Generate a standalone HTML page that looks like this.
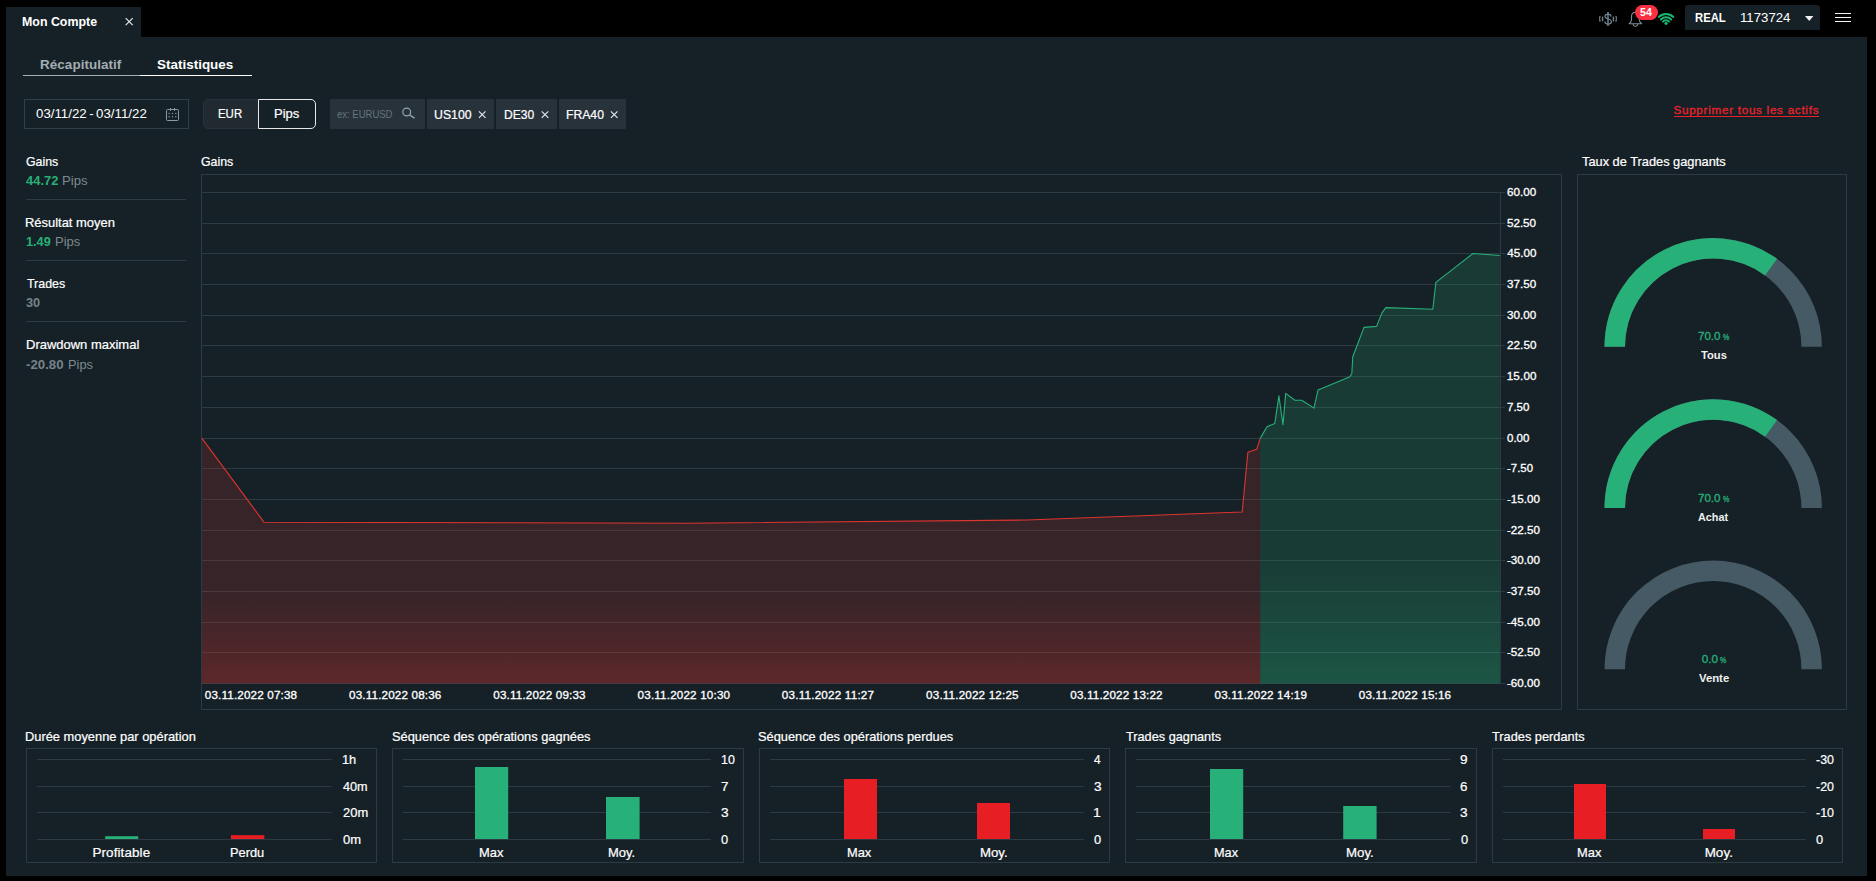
<!DOCTYPE html>
<html lang="fr"><head><meta charset="utf-8"><title>Mon Compte - Statistiques</title>
<style>

html,body{margin:0;padding:0;background:#000;}
body{width:1876px;height:881px;position:relative;overflow:hidden;font-family:"Liberation Sans", sans-serif;}
.t{position:absolute;white-space:nowrap;line-height:1;margin:0;padding:0;display:block;transform-origin:0 0;}

.card{}
</style></head>
<body>

<div class="tab" style="position:absolute;left:6px;top:7px;width:135px;height:31px;box-sizing:border-box;background:#162127;"></div>
<div class="panel" style="position:absolute;left:6px;top:37px;width:1861px;height:839px;box-sizing:border-box;background:#162127;"></div>
<div class="account" style="position:absolute;left:1685px;top:5px;width:135px;height:25px;box-sizing:border-box;background:#162127;border-radius:3px 3px 0 0;"></div>
<div class="" style="position:absolute;left:23px;top:75px;width:117px;height:1px;box-sizing:border-box;background:#a3adb2;"></div>
<div class="" style="position:absolute;left:140px;top:75px;width:112px;height:1px;box-sizing:border-box;background:#ffffff;"></div>
<div class="date" style="position:absolute;left:24px;top:99px;width:165px;height:30px;box-sizing:border-box;border:1px solid #2f3f48;"></div>
<div class="seg" style="position:absolute;left:203px;top:99px;width:56px;height:30px;box-sizing:border-box;background:#212a31;border:1px solid #28323a;border-radius:5px 0 0 5px;"></div>
<div class="seg on" style="position:absolute;left:258px;top:99px;width:58px;height:30px;box-sizing:border-box;background:#162127;border:1px solid #e8e8e8;border-radius:0 5px 5px 0;"></div>
<div class="search" style="position:absolute;left:330px;top:99px;width:95px;height:30px;box-sizing:border-box;background:#28323a;"></div>
<div class="tag" style="position:absolute;left:427px;top:99px;width:67px;height:30px;box-sizing:border-box;background:#28323a;"></div>
<div class="tag" style="position:absolute;left:496px;top:99px;width:61px;height:30px;box-sizing:border-box;background:#28323a;"></div>
<div class="tag" style="position:absolute;left:559px;top:99px;width:67px;height:30px;box-sizing:border-box;background:#28323a;"></div>
<div class="" style="position:absolute;left:1674px;top:116px;width:145px;height:1px;box-sizing:border-box;background:#e8222b;"></div>
<div class="" style="position:absolute;left:26px;top:199px;width:160px;height:1px;box-sizing:border-box;background:#2b3a43;"></div>
<div class="" style="position:absolute;left:26px;top:260px;width:160px;height:1px;box-sizing:border-box;background:#2b3a43;"></div>
<div class="" style="position:absolute;left:26px;top:321px;width:160px;height:1px;box-sizing:border-box;background:#2b3a43;"></div>
<div class="card" style="position:absolute;left:201px;top:174px;width:1361px;height:536px;box-sizing:border-box;border:1px solid #2b3a43;"></div>
<div class="card" style="position:absolute;left:1577px;top:174px;width:270px;height:536px;box-sizing:border-box;border:1px solid #2b3a43;"></div>
<svg style="position:absolute;left:201px;top:174px;overflow:visible;" width="1361" height="536" viewBox="201 174 1361 536"><defs><linearGradient id="gr" x1="0" y1="438" x2="0" y2="683.5" gradientUnits="userSpaceOnUse"><stop offset="0" stop-color="#e0342f" stop-opacity="0.16"/><stop offset="0.64" stop-color="#e0342f" stop-opacity="0.165"/><stop offset="1" stop-color="#e0342f" stop-opacity="0.35"/></linearGradient><linearGradient id="gg" x1="0" y1="253" x2="0" y2="683.5" gradientUnits="userSpaceOnUse"><stop offset="0" stop-color="#27b077" stop-opacity="0.175"/><stop offset="0.7" stop-color="#27b077" stop-opacity="0.18"/><stop offset="1" stop-color="#27b077" stop-opacity="0.37"/></linearGradient></defs><line x1="202" x2="1505" y1="192.5" y2="192.5" stroke="#2b3a43" stroke-width="1"/><line x1="202" x2="1505" y1="223.5" y2="223.5" stroke="#2b3a43" stroke-width="1"/><line x1="202" x2="1505" y1="253.5" y2="253.5" stroke="#2b3a43" stroke-width="1"/><line x1="202" x2="1505" y1="284.5" y2="284.5" stroke="#2b3a43" stroke-width="1"/><line x1="202" x2="1505" y1="315.5" y2="315.5" stroke="#2b3a43" stroke-width="1"/><line x1="202" x2="1505" y1="345.5" y2="345.5" stroke="#2b3a43" stroke-width="1"/><line x1="202" x2="1505" y1="376.5" y2="376.5" stroke="#2b3a43" stroke-width="1"/><line x1="202" x2="1505" y1="407.5" y2="407.5" stroke="#2b3a43" stroke-width="1"/><line x1="202" x2="1505" y1="438.5" y2="438.5" stroke="#2b3a43" stroke-width="1"/><line x1="202" x2="1505" y1="468.5" y2="468.5" stroke="#2b3a43" stroke-width="1"/><line x1="202" x2="1505" y1="499.5" y2="499.5" stroke="#2b3a43" stroke-width="1"/><line x1="202" x2="1505" y1="530.5" y2="530.5" stroke="#2b3a43" stroke-width="1"/><line x1="202" x2="1505" y1="560.5" y2="560.5" stroke="#2b3a43" stroke-width="1"/><line x1="202" x2="1505" y1="591.5" y2="591.5" stroke="#2b3a43" stroke-width="1"/><line x1="202" x2="1505" y1="622.5" y2="622.5" stroke="#2b3a43" stroke-width="1"/><line x1="202" x2="1505" y1="652.5" y2="652.5" stroke="#2b3a43" stroke-width="1"/><line x1="202" x2="1505" y1="683.5" y2="683.5" stroke="#2b3a43" stroke-width="1"/><line x1="1500.5" x2="1500.5" y1="192" y2="684" stroke="#2b3a43" stroke-width="1"/><polygon points="202.0,438.4 264.1,522.3 686.0,523.2 1027.0,520.0 1242.2,512.0 1247.9,452.3 1256.8,449.3 1260.2,438.4 1260.2,683.5 202.0,683.5" fill="url(#gr)"/><polygon points="1260.2,438.4 1267.0,426.8 1274.8,423.4 1278.9,395.8 1283.0,424.8 1285.7,393.4 1294.9,400.2 1301.7,400.2 1314.0,408.1 1318.0,390.0 1349.4,377.1 1351.8,373.7 1352.8,356.7 1364.0,327.4 1376.6,326.4 1381.7,313.4 1385.8,307.6 1432.8,309.3 1435.9,282.4 1473.0,253.5 1499.9,255.5 1499.9,683.5 1260.2,683.5" fill="url(#gg)"/><polyline points="202.0,438.4 264.1,522.3 686.0,523.2 1027.0,520.0 1242.2,512.0 1247.9,452.3 1256.8,449.3 1260.2,438.4" fill="none" stroke="#e0342f" stroke-width="1.1" stroke-linejoin="round"/><polyline points="1260.2,438.4 1267.0,426.8 1274.8,423.4 1278.9,395.8 1283.0,424.8 1285.7,393.4 1294.9,400.2 1301.7,400.2 1314.0,408.1 1318.0,390.0 1349.4,377.1 1351.8,373.7 1352.8,356.7 1364.0,327.4 1376.6,326.4 1381.7,313.4 1385.8,307.6 1432.8,309.3 1435.9,282.4 1473.0,253.5 1499.9,255.5" fill="none" stroke="#27b077" stroke-width="1.1" stroke-linejoin="round"/></svg>
<svg style="position:absolute;left:1577px;top:174px;overflow:visible;" width="270" height="536" viewBox="1577 174 270 536"><path d="M1614.75 346.80A98.45 98.45 0 0 1 1811.65 346.80" fill="none" stroke="#465a65" stroke-width="20.5"/><path d="M1614.75 346.80A98.45 98.45 0 0 1 1771.07 267.15" fill="none" stroke="#27b077" stroke-width="20.5"/><path d="M1614.75 508.00A98.45 98.45 0 0 1 1811.65 508.00" fill="none" stroke="#465a65" stroke-width="20.5"/><path d="M1614.75 508.00A98.45 98.45 0 0 1 1771.07 428.35" fill="none" stroke="#27b077" stroke-width="20.5"/><path d="M1614.75 669.20A98.45 98.45 0 0 1 1811.65 669.20" fill="none" stroke="#465a65" stroke-width="20.5"/></svg>
<div class="card" style="position:absolute;left:26px;top:748px;width:351px;height:115px;box-sizing:border-box;border:1px solid #2b3a43;"></div>
<svg style="position:absolute;left:26px;top:748px;overflow:visible;" width="351" height="115" viewBox="26 748 351 115"><line x1="37" x2="331.5" y1="759.5" y2="759.5" stroke="#2b3a43" stroke-width="1"/><line x1="37" x2="331.5" y1="786.5" y2="786.5" stroke="#2b3a43" stroke-width="1"/><line x1="37" x2="331.5" y1="812.5" y2="812.5" stroke="#2b3a43" stroke-width="1"/><line x1="37" x2="331.5" y1="839.5" y2="839.5" stroke="#2b3a43" stroke-width="1"/><rect x="105.2" y="836.2" width="33.0" height="2.8" fill="#27b077"/><rect x="231" y="835.2" width="33.3" height="3.8" fill="#e81e25"/></svg>
<div class="card" style="position:absolute;left:392px;top:748px;width:352px;height:115px;box-sizing:border-box;border:1px solid #2b3a43;"></div>
<svg style="position:absolute;left:392px;top:748px;overflow:visible;" width="352" height="115" viewBox="392 748 352 115"><line x1="403" x2="711" y1="759.5" y2="759.5" stroke="#2b3a43" stroke-width="1"/><line x1="403" x2="711" y1="786.5" y2="786.5" stroke="#2b3a43" stroke-width="1"/><line x1="403" x2="711" y1="812.5" y2="812.5" stroke="#2b3a43" stroke-width="1"/><line x1="403" x2="711" y1="839.5" y2="839.5" stroke="#2b3a43" stroke-width="1"/><rect x="475" y="767" width="33.2" height="72.0" fill="#27b077"/><rect x="606" y="797" width="33.6" height="42.0" fill="#27b077"/></svg>
<div class="card" style="position:absolute;left:759px;top:748px;width:351px;height:115px;box-sizing:border-box;border:1px solid #2b3a43;"></div>
<svg style="position:absolute;left:759px;top:748px;overflow:visible;" width="351" height="115" viewBox="759 748 351 115"><line x1="770" x2="1084" y1="759.5" y2="759.5" stroke="#2b3a43" stroke-width="1"/><line x1="770" x2="1084" y1="786.5" y2="786.5" stroke="#2b3a43" stroke-width="1"/><line x1="770" x2="1084" y1="812.5" y2="812.5" stroke="#2b3a43" stroke-width="1"/><line x1="770" x2="1084" y1="839.5" y2="839.5" stroke="#2b3a43" stroke-width="1"/><rect x="844" y="779" width="33.0" height="60.0" fill="#e81e25"/><rect x="977" y="803" width="33.0" height="36.0" fill="#e81e25"/></svg>
<div class="card" style="position:absolute;left:1125px;top:748px;width:352px;height:115px;box-sizing:border-box;border:1px solid #2b3a43;"></div>
<svg style="position:absolute;left:1125px;top:748px;overflow:visible;" width="352" height="115" viewBox="1125 748 352 115"><line x1="1136" x2="1450.6" y1="759.5" y2="759.5" stroke="#2b3a43" stroke-width="1"/><line x1="1136" x2="1450.6" y1="786.5" y2="786.5" stroke="#2b3a43" stroke-width="1"/><line x1="1136" x2="1450.6" y1="812.5" y2="812.5" stroke="#2b3a43" stroke-width="1"/><line x1="1136" x2="1450.6" y1="839.5" y2="839.5" stroke="#2b3a43" stroke-width="1"/><rect x="1210" y="769" width="33.2" height="70.0" fill="#27b077"/><rect x="1343.2" y="806" width="33.4" height="33.0" fill="#27b077"/></svg>
<div class="card" style="position:absolute;left:1492px;top:748px;width:351px;height:115px;box-sizing:border-box;border:1px solid #2b3a43;"></div>
<svg style="position:absolute;left:1492px;top:748px;overflow:visible;" width="351" height="115" viewBox="1492 748 351 115"><line x1="1503" x2="1806" y1="759.5" y2="759.5" stroke="#2b3a43" stroke-width="1"/><line x1="1503" x2="1806" y1="786.5" y2="786.5" stroke="#2b3a43" stroke-width="1"/><line x1="1503" x2="1806" y1="812.5" y2="812.5" stroke="#2b3a43" stroke-width="1"/><line x1="1503" x2="1806" y1="839.5" y2="839.5" stroke="#2b3a43" stroke-width="1"/><rect x="1574" y="784" width="32.0" height="55.0" fill="#e81e25"/><rect x="1703" y="829" width="32.0" height="10.0" fill="#e81e25"/></svg>
<svg style="position:absolute;left:0px;top:0px;overflow:visible;pointer-events:none;" width="1876" height="130" viewBox="0 0 1876 130"><path d="M125.69999999999999 18.1L132.7 25.1M132.7 18.1L125.69999999999999 25.1" stroke="#e4e6e7" stroke-width="1.2" fill="none"/><path d="M1608 12v14.100" stroke="#70858f" stroke-width="1.5" fill="none"/><path d="M1611.1 16.6c-0.100-1.700-1.300-2.500-3.000-2.500c-1.800 0-3.100 0.900-3.100 2.400c0 1.400 1.100 2.000 3.100 2.500c2.100 0.500 3.300 1.200 3.300 2.700c0 1.500-1.400 2.400-3.300 2.400c-1.900 0-3.200-0.900-3.300-2.600" stroke="#70858f" stroke-width="1.200" fill="none"/><path d="M1602.6 17.100V20.700" stroke="#70858f" stroke-width="1.400" fill="none" stroke-linecap="round"/><path d="M1600.7 16.800H1599.6999999999998V20.900H1600.7" stroke="#70858f" stroke-width="1.100" fill="none"/><path d="M1613.4 17.100V20.700" stroke="#70858f" stroke-width="1.400" fill="none" stroke-linecap="round"/><path d="M1615.3 16.800H1616.3000000000002V20.900H1615.3" stroke="#70858f" stroke-width="1.100" fill="none"/><path d="M1629.2 23.7h12.400c-1.500-1.300-2.300-2.300-2.300-4.000v-3.000c0-2.700-1.700-4.400-3.900-4.400s-3.900 1.700-3.900 4.400v3.000c0 1.700-0.800 2.700-2.300 4.000z" stroke="#7f8d95" stroke-width="1.100" fill="none" stroke-linejoin="round"/><path d="M1633.1000000000001 24.200c0.300 1.500 1.200 2.300 2.300 2.300s2.000-0.800 2.300-2.300" stroke="#7f8d95" stroke-width="1.100" fill="none"/><rect x="1635" y="5" width="23" height="15" rx="7.5" fill="#fa3143"/><path d="M1662.98 21.64A4.2 4.2 0 0 1 1669.12 21.64" stroke="#1bb673" stroke-width="1.900" fill="none" stroke-linecap="round"/><path d="M1660.87 19.50A7.2 7.2 0 0 1 1671.23 19.50" stroke="#1bb673" stroke-width="1.900" fill="none" stroke-linecap="round"/><path d="M1658.76 16.95A10.5 10.5 0 0 1 1673.34 16.95" stroke="#1bb673" stroke-width="1.900" fill="none" stroke-linecap="round"/><circle cx="1666.05" cy="23.300" r="1.600" fill="#1bb673"/><path d="M1805 16h8.400l-4.200 5z" fill="#f2f2f2"/><rect x="1835" y="13" width="16" height="1" fill="#f5f5f5"/><rect x="1835" y="17" width="16" height="1" fill="#f5f5f5"/><rect x="1835" y="21" width="16" height="1" fill="#f5f5f5"/><rect x="166.5" y="109.500" width="12" height="11" rx="1" fill="none" stroke="#8a9aa4" stroke-width="1"/><path d="M170.5 108V110.800" stroke="#8a9aa4" stroke-width="1"/><path d="M174.5 108V110.800" stroke="#8a9aa4" stroke-width="1"/><rect x="168.5" y="112.9" width="1.2" height="1.2" fill="#8a9aa4"/><rect x="168.5" y="116.10000000000001" width="1.2" height="1.2" fill="#8a9aa4"/><rect x="171.9" y="112.9" width="1.2" height="1.2" fill="#8a9aa4"/><rect x="171.9" y="116.10000000000001" width="1.2" height="1.2" fill="#8a9aa4"/><rect x="175.20000000000002" y="112.9" width="1.2" height="1.2" fill="#8a9aa4"/><rect x="175.20000000000002" y="116.10000000000001" width="1.2" height="1.2" fill="#8a9aa4"/><circle cx="406.700" cy="112" r="3.900" fill="none" stroke="#93a7b1" stroke-width="1.200"/><path d="M409.6 114.900L414.500 118.100" stroke="#93a7b1" stroke-width="1.300"/><path d="M478.9 111.3L485.5 117.89999999999999M485.5 111.3L478.9 117.89999999999999" stroke="#e4e6e7" stroke-width="1.2" fill="none"/><path d="M541.7 111.3L548.3 117.89999999999999M548.3 111.3L541.7 117.89999999999999" stroke="#e4e6e7" stroke-width="1.2" fill="none"/><path d="M610.9000000000001 111.3L617.5 117.89999999999999M617.5 111.3L610.9000000000001 117.89999999999999" stroke="#e4e6e7" stroke-width="1.2" fill="none"/></svg>
<span class="t " style="left:21.81px;top:15.10px;font-size:13.43px;transform:scaleX(0.9237);font-weight:700;color:#fff;">Mon Compte</span>
<span class="t " style="left:1640.48px;top:7.00px;font-size:11.36px;transform:scaleX(0.9376);font-weight:700;color:#fff;">54</span>
<span class="t " style="left:1694.66px;top:10.90px;font-size:13.43px;transform:scaleX(0.8415);font-weight:700;color:#fff;">REAL</span>
<span class="t " style="left:1740.06px;top:10.90px;font-size:13.43px;transform:scaleX(0.9836);color:#fff;">1173724</span>
<span class="t " style="left:40.10px;top:57.80px;font-size:13.43px;font-weight:700;letter-spacing:0.052px;color:#a3adb2;">Récapitulatif</span>
<span class="t " style="left:157.06px;top:57.80px;font-size:13.43px;font-weight:700;letter-spacing:0.013px;color:#fff;">Statistiques</span>
<span class="t " style="left:35.54px;top:106.90px;font-size:13.43px;transform:scaleX(0.9890);color:#fff;word-spacing:-1.2px;">03/11/22 - 03/11/22</span>
<span class="t " style="left:218.35px;top:107.00px;font-size:13.43px;transform:scaleX(0.8517);-webkit-text-stroke:0.22px #fff;color:#fff;">EUR</span>
<span class="t " style="left:273.85px;top:107.00px;font-size:13.43px;transform:scaleX(0.9704);-webkit-text-stroke:0.22px #fff;color:#fff;">Pips</span>
<span class="t " style="left:336.71px;top:108.60px;font-size:11.36px;transform:scaleX(0.8366);color:#67747c;">ex: EURUSD</span>
<span class="t " style="left:433.94px;top:107.80px;font-size:13.43px;transform:scaleX(0.9176);-webkit-text-stroke:0.22px #fff;color:#fff;">US100</span>
<span class="t " style="left:503.68px;top:107.80px;font-size:13.43px;transform:scaleX(0.9013);-webkit-text-stroke:0.22px #fff;color:#fff;">DE30</span>
<span class="t " style="left:565.88px;top:107.80px;font-size:13.43px;transform:scaleX(0.9073);-webkit-text-stroke:0.22px #fff;color:#fff;">FRA40</span>
<span class="t " style="left:1673.48px;top:104.30px;font-size:11.65px;-webkit-text-stroke:0.32px #e8222b;letter-spacing:0.731px;color:#e8222b;">Supprimer tous les actifs</span>
<span class="t " style="left:25.88px;top:155.00px;font-size:13.43px;transform:scaleX(0.9210);-webkit-text-stroke:0.22px #fff;color:#fff;">Gains</span>
<span class="t " style="left:26.13px;top:174.00px;font-size:13.43px;transform:scaleX(0.9650);font-weight:700;color:#27b077;">44.72</span>
<span class="t " style="left:62.30px;top:174.00px;font-size:13.43px;transform:scaleX(0.9792);color:#7d8990;">Pips</span>
<span class="t " style="left:25.26px;top:216.00px;font-size:13.43px;transform:scaleX(0.9635);-webkit-text-stroke:0.22px #fff;color:#fff;">Résultat moyen</span>
<span class="t " style="left:26.33px;top:235.00px;font-size:13.43px;transform:scaleX(0.9462);font-weight:700;color:#27b077;">1.49</span>
<span class="t " style="left:54.82px;top:235.00px;font-size:13.43px;transform:scaleX(0.9710);color:#7d8990;">Pips</span>
<span class="t " style="left:26.56px;top:277.00px;font-size:13.43px;transform:scaleX(0.9234);-webkit-text-stroke:0.22px #fff;color:#fff;">Trades</span>
<span class="t " style="left:26.15px;top:296.00px;font-size:13.43px;transform:scaleX(0.9512);font-weight:700;color:#76838a;">30</span>
<span class="t " style="left:25.65px;top:338.00px;font-size:13.43px;transform:scaleX(0.9675);-webkit-text-stroke:0.22px #fff;color:#fff;">Drawdown maximal</span>
<span class="t " style="left:26.27px;top:357.60px;font-size:13.43px;transform:scaleX(0.9877);font-weight:700;color:#76838a;">-20.80</span>
<span class="t " style="left:67.93px;top:357.60px;font-size:13.43px;transform:scaleX(0.9536);color:#7d8990;">Pips</span>
<span class="t " style="left:200.98px;top:155.00px;font-size:13.43px;transform:scaleX(0.9210);-webkit-text-stroke:0.22px #fff;color:#fff;">Gains</span>
<span class="t " style="left:1506.93px;top:186.00px;font-size:11.65px;-webkit-text-stroke:0.32px #fff;letter-spacing:0.016px;color:#fff;">60.00</span>
<span class="t " style="left:1506.95px;top:216.69px;font-size:11.65px;-webkit-text-stroke:0.32px #fff;letter-spacing:-0.004px;color:#fff;">52.50</span>
<span class="t " style="left:1507.20px;top:247.38px;font-size:11.65px;-webkit-text-stroke:0.32px #fff;letter-spacing:0.014px;color:#fff;">45.00</span>
<span class="t " style="left:1506.90px;top:278.06px;font-size:11.65px;-webkit-text-stroke:0.32px #fff;letter-spacing:0.047px;color:#fff;">37.50</span>
<span class="t " style="left:1506.90px;top:308.75px;font-size:11.65px;-webkit-text-stroke:0.32px #fff;letter-spacing:0.047px;color:#fff;">30.00</span>
<span class="t " style="left:1506.99px;top:339.44px;font-size:11.65px;-webkit-text-stroke:0.32px #fff;letter-spacing:0.087px;color:#fff;">22.50</span>
<span class="t " style="left:1506.73px;top:370.12px;font-size:11.65px;-webkit-text-stroke:0.32px #fff;letter-spacing:0.169px;color:#fff;">15.00</span>
<span class="t " style="left:1506.98px;top:400.81px;font-size:11.65px;transform:scaleX(0.9899);-webkit-text-stroke:0.32px #fff;color:#fff;">7.50</span>
<span class="t " style="left:1507.03px;top:431.50px;font-size:11.65px;transform:scaleX(0.9900);-webkit-text-stroke:0.32px #fff;color:#fff;">0.00</span>
<span class="t " style="left:1506.77px;top:462.19px;font-size:11.65px;transform:scaleX(0.9786);-webkit-text-stroke:0.32px #fff;color:#fff;">-7.50</span>
<span class="t " style="left:1506.76px;top:492.88px;font-size:11.65px;transform:scaleX(0.9942);-webkit-text-stroke:0.32px #fff;color:#fff;">-15.00</span>
<span class="t " style="left:1506.76px;top:523.56px;font-size:11.65px;transform:scaleX(0.9942);-webkit-text-stroke:0.32px #fff;color:#fff;">-22.50</span>
<span class="t " style="left:1506.76px;top:554.25px;font-size:11.65px;transform:scaleX(0.9942);-webkit-text-stroke:0.32px #fff;color:#fff;">-30.00</span>
<span class="t " style="left:1506.76px;top:584.94px;font-size:11.65px;transform:scaleX(0.9942);-webkit-text-stroke:0.32px #fff;color:#fff;">-37.50</span>
<span class="t " style="left:1506.76px;top:615.62px;font-size:11.65px;transform:scaleX(0.9942);-webkit-text-stroke:0.32px #fff;color:#fff;">-45.00</span>
<span class="t " style="left:1506.76px;top:646.31px;font-size:11.65px;transform:scaleX(0.9942);-webkit-text-stroke:0.32px #fff;color:#fff;">-52.50</span>
<span class="t " style="left:1506.76px;top:677.00px;font-size:11.65px;transform:scaleX(0.9942);-webkit-text-stroke:0.32px #fff;color:#fff;">-60.00</span>
<span class="t " style="left:204.83px;top:689.10px;font-size:11.65px;-webkit-text-stroke:0.32px #fff;letter-spacing:0.164px;color:#fff;">03.11.2022 07:38</span>
<span class="t " style="left:349.08px;top:689.10px;font-size:11.65px;-webkit-text-stroke:0.32px #fff;letter-spacing:0.165px;color:#fff;">03.11.2022 08:36</span>
<span class="t " style="left:493.33px;top:689.10px;font-size:11.65px;-webkit-text-stroke:0.32px #fff;letter-spacing:0.165px;color:#fff;">03.11.2022 09:33</span>
<span class="t " style="left:637.58px;top:689.10px;font-size:11.65px;-webkit-text-stroke:0.32px #fff;letter-spacing:0.180px;color:#fff;">03.11.2022 10:30</span>
<span class="t " style="left:781.83px;top:689.10px;font-size:11.65px;-webkit-text-stroke:0.32px #fff;letter-spacing:0.219px;color:#fff;">03.11.2022 11:27</span>
<span class="t " style="left:926.08px;top:689.10px;font-size:11.65px;-webkit-text-stroke:0.32px #fff;letter-spacing:0.180px;color:#fff;">03.11.2022 12:25</span>
<span class="t " style="left:1070.33px;top:689.10px;font-size:11.65px;-webkit-text-stroke:0.32px #fff;letter-spacing:0.167px;color:#fff;">03.11.2022 13:22</span>
<span class="t " style="left:1214.58px;top:689.10px;font-size:11.65px;-webkit-text-stroke:0.32px #fff;letter-spacing:0.172px;color:#fff;">03.11.2022 14:19</span>
<span class="t " style="left:1358.83px;top:689.10px;font-size:11.65px;-webkit-text-stroke:0.32px #fff;letter-spacing:0.165px;color:#fff;">03.11.2022 15:16</span>
<span class="t " style="left:1582.36px;top:155.20px;font-size:13.43px;transform:scaleX(0.9538);-webkit-text-stroke:0.22px #fff;color:#fff;">Taux de Trades gagnants</span>
<span class="t " style="left:25.26px;top:730.00px;font-size:13.43px;transform:scaleX(0.9578);-webkit-text-stroke:0.22px #fff;color:#fff;">Durée moyenne par opération</span>
<span class="t " style="left:391.76px;top:730.00px;font-size:13.43px;transform:scaleX(0.9568);-webkit-text-stroke:0.22px #fff;color:#fff;">Séquence des opérations gagnées</span>
<span class="t " style="left:758.36px;top:730.00px;font-size:13.43px;transform:scaleX(0.9548);-webkit-text-stroke:0.22px #fff;color:#fff;">Séquence des opérations perdues</span>
<span class="t " style="left:1125.96px;top:730.00px;font-size:13.43px;transform:scaleX(0.9482);-webkit-text-stroke:0.22px #fff;color:#fff;">Trades gagnants</span>
<span class="t " style="left:1492.26px;top:730.00px;font-size:13.43px;transform:scaleX(0.9522);-webkit-text-stroke:0.22px #fff;color:#fff;">Trades perdants</span>
<span class="t " style="left:342.44px;top:752.90px;font-size:13.43px;transform:scaleX(0.9526);-webkit-text-stroke:0.22px #fff;color:#fff;">1h</span>
<span class="t " style="left:342.97px;top:779.60px;font-size:13.43px;transform:scaleX(0.9430);-webkit-text-stroke:0.22px #fff;color:#fff;">40m</span>
<span class="t " style="left:342.65px;top:806.20px;font-size:13.43px;transform:scaleX(0.9633);-webkit-text-stroke:0.22px #fff;color:#fff;">20m</span>
<span class="t " style="left:342.76px;top:832.90px;font-size:13.43px;transform:scaleX(0.9672);-webkit-text-stroke:0.22px #fff;color:#fff;">0m</span>
<span class="t " style="left:720.86px;top:752.90px;font-size:13.43px;transform:scaleX(0.9257);-webkit-text-stroke:0.22px #fff;color:#fff;">10</span>
<span class="t " style="left:720.93px;top:779.60px;font-size:13.43px;transform:scaleX(0.9963);-webkit-text-stroke:0.22px #fff;color:#fff;">7</span>
<span class="t " style="left:720.79px;top:806.20px;font-size:13.43px;transform:scaleX(1.0196);-webkit-text-stroke:0.22px #fff;color:#fff;">3</span>
<span class="t " style="left:721.01px;top:832.90px;font-size:13.43px;transform:scaleX(0.9568);-webkit-text-stroke:0.22px #fff;color:#fff;">0</span>
<span class="t " style="left:1094.12px;top:752.90px;font-size:13.43px;transform:scaleX(0.8814);-webkit-text-stroke:0.22px #fff;color:#fff;">4</span>
<span class="t " style="left:1093.69px;top:779.60px;font-size:13.43px;transform:scaleX(1.0196);-webkit-text-stroke:0.22px #fff;color:#fff;">3</span>
<span class="t " style="left:1093.22px;top:806.20px;font-size:13.43px;transform:scaleX(1.0469);-webkit-text-stroke:0.22px #fff;color:#fff;">1</span>
<span class="t " style="left:1093.91px;top:832.90px;font-size:13.43px;transform:scaleX(0.9568);-webkit-text-stroke:0.22px #fff;color:#fff;">0</span>
<span class="t " style="left:1460.39px;top:752.90px;font-size:13.43px;transform:scaleX(1.0130);-webkit-text-stroke:0.22px #fff;color:#fff;">9</span>
<span class="t " style="left:1460.37px;top:779.60px;font-size:13.43px;transform:scaleX(0.9908);-webkit-text-stroke:0.22px #fff;color:#fff;">6</span>
<span class="t " style="left:1460.29px;top:806.20px;font-size:13.43px;transform:scaleX(1.0196);-webkit-text-stroke:0.22px #fff;color:#fff;">3</span>
<span class="t " style="left:1460.51px;top:832.90px;font-size:13.43px;transform:scaleX(0.9568);-webkit-text-stroke:0.22px #fff;color:#fff;">0</span>
<span class="t " style="left:1815.77px;top:752.90px;font-size:13.43px;transform:scaleX(0.9270);-webkit-text-stroke:0.22px #fff;color:#fff;">-30</span>
<span class="t " style="left:1815.77px;top:779.60px;font-size:13.43px;transform:scaleX(0.9270);-webkit-text-stroke:0.22px #fff;color:#fff;">-20</span>
<span class="t " style="left:1815.77px;top:806.20px;font-size:13.43px;transform:scaleX(0.9270);-webkit-text-stroke:0.22px #fff;color:#fff;">-10</span>
<span class="t " style="left:1815.61px;top:832.90px;font-size:13.43px;transform:scaleX(0.9568);-webkit-text-stroke:0.22px #fff;color:#fff;">0</span>
<span class="t " style="left:92.43px;top:846.10px;font-size:13.43px;-webkit-text-stroke:0.22px #fff;letter-spacing:0.108px;color:#fff;">Profitable</span>
<span class="t " style="left:230.16px;top:846.10px;font-size:13.43px;transform:scaleX(0.9560);-webkit-text-stroke:0.22px #fff;color:#fff;">Perdu</span>
<span class="t " style="left:478.86px;top:846.10px;font-size:13.43px;transform:scaleX(0.9617);-webkit-text-stroke:0.22px #fff;color:#fff;">Max</span>
<span class="t " style="left:608.06px;top:846.10px;font-size:13.43px;transform:scaleX(0.9658);-webkit-text-stroke:0.22px #fff;color:#fff;">Moy.</span>
<span class="t " style="left:847.46px;top:846.10px;font-size:13.43px;transform:scaleX(0.9584);-webkit-text-stroke:0.22px #fff;color:#fff;">Max</span>
<span class="t " style="left:979.63px;top:846.10px;font-size:13.43px;transform:scaleX(0.9838);-webkit-text-stroke:0.22px #fff;color:#fff;">Moy.</span>
<span class="t " style="left:1213.66px;top:846.10px;font-size:13.43px;transform:scaleX(0.9470);-webkit-text-stroke:0.22px #fff;color:#fff;">Max</span>
<span class="t " style="left:1345.83px;top:846.10px;font-size:13.43px;transform:scaleX(0.9856);-webkit-text-stroke:0.22px #fff;color:#fff;">Moy.</span>
<span class="t " style="left:1576.56px;top:846.10px;font-size:13.43px;transform:scaleX(0.9599);-webkit-text-stroke:0.22px #fff;color:#fff;">Max</span>
<span class="t " style="left:1704.63px;top:846.10px;font-size:13.43px;-webkit-text-stroke:0.22px #fff;letter-spacing:0.054px;color:#fff;">Moy.</span>
<span class="t " style="left:1698.38px;top:330.30px;font-size:11.65px;transform:scaleX(0.9929);-webkit-text-stroke:0.32px #27b077;color:#27b077;">70.0</span>
<span class="t " style="left:1722.81px;top:333.30px;font-size:8.99px;transform:scaleX(0.7913);-webkit-text-stroke:0.32px #27b077;color:#27b077;">%</span>
<span class="t " style="left:1700.87px;top:349.00px;font-size:11.65px;transform:scaleX(0.9629);font-weight:700;color:#f0f0f0;">Tous</span>
<span class="t " style="left:1698.38px;top:491.50px;font-size:11.65px;transform:scaleX(0.9929);-webkit-text-stroke:0.32px #27b077;color:#27b077;">70.0</span>
<span class="t " style="left:1722.81px;top:494.50px;font-size:8.99px;transform:scaleX(0.7913);-webkit-text-stroke:0.32px #27b077;color:#27b077;">%</span>
<span class="t " style="left:1698.43px;top:510.70px;font-size:11.65px;transform:scaleX(0.9274);font-weight:700;color:#f0f0f0;">Achat</span>
<span class="t " style="left:1701.83px;top:653.10px;font-size:11.65px;-webkit-text-stroke:0.32px #27b077;letter-spacing:0.035px;color:#27b077;">0.0</span>
<span class="t " style="left:1719.59px;top:656.10px;font-size:8.99px;transform:scaleX(0.7773);-webkit-text-stroke:0.32px #27b077;color:#27b077;">%</span>
<span class="t " style="left:1698.70px;top:671.90px;font-size:11.65px;transform:scaleX(0.9716);font-weight:700;color:#f0f0f0;">Vente</span>

</body></html>
